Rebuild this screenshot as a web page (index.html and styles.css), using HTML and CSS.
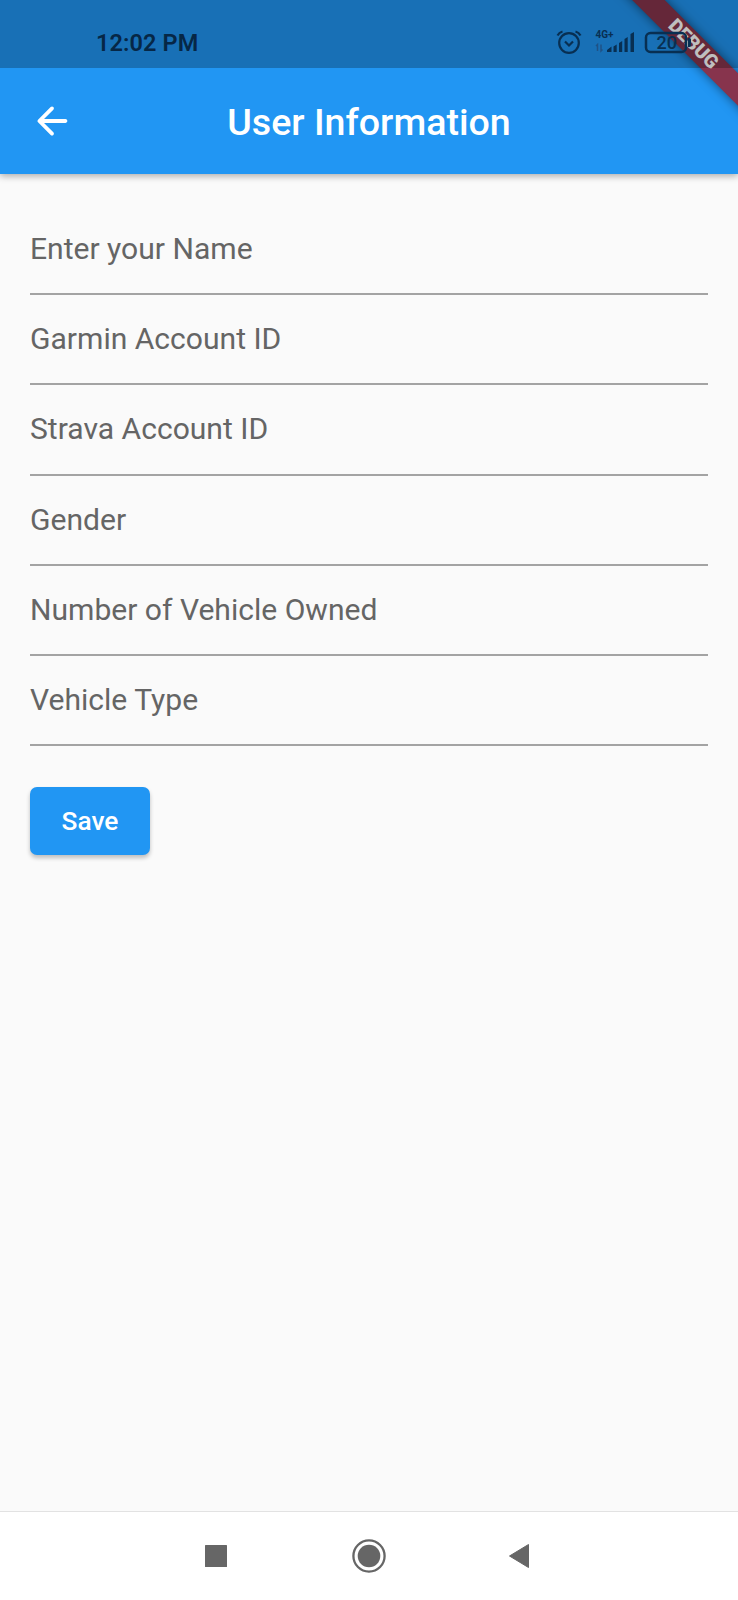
FILE: index.html
```html
<!DOCTYPE html>
<html lang="en">
<head>
<meta charset="utf-8">
<title>User Information</title>
<link rel="stylesheet" href="styles.css">
</head>
<body>
<div class="screen">
  <header class="top">
    <div class="status">
      <span class="clock">12:02 PM</span>
      <svg class="status-icons" width="138" height="36" viewBox="0 0 138 36">
        <g fill="none" stroke="#082f52" stroke-width="2.200">
          <circle cx="13" cy="18" r="9.800"/>
          <path d="M9 16.500l4 4 4-4M1.500 10.500Q3 7.500 6.500 6.500M19.500 6.500Q23 7.500 24.500 10.500"/>
          <rect x="90" y="8" width="40" height="19" rx="4.500" stroke-width="2.500"/>
        </g>
        <path class="ink" d="M132 13h1.500q1.500 0 1.500 1.500v6q0 1.500-1.500 1.500H132zM51 27v-2l4.500-3.500V27zM57.500 21.500l3.200-2V27h-3.200zM63 18l3.200-2v11h-3.200zM68.500 14l3.200-2v15h-3.200zM74.500 9l3.500-2v20h-3.500z"/>
        <path d="M41.500 26v-6.500l-1.500 1.500M45 19.500V26l1.500-1.500" fill="none" stroke="#1f5286" stroke-width="1.500"/>
        <text class="network" x="39.500" y="13">4G+</text>
        <text class="battery" x="100.500" y="23.500">20</text>
      </svg>
    </div>
    <div class="appbar">
      <svg class="back" width="46" height="46" viewBox="0 0 24 24"><path d="M19 11H7.830l4.880-4.880c.39-.39.39-1.030 0-1.420-.39-.39-1.020-.39-1.410 0l-6.590 6.590c-.39.39-.39 1.020 0 1.410l6.590 6.590c.39.39 1.020.39 1.410 0 .39-.39.39-1.020 0-1.410L7.830 13H19c.550 0 1-.450 1-1s-.450-1-1-1z"/></svg>
      <h1 class="title">User Information</h1>
    </div>
  </header>
  <main class="form">
    <div class="field">Enter your Name</div>
    <div class="field">Garmin Account ID</div>
    <div class="field">Strava Account ID</div>
    <div class="field">Gender</div>
    <div class="field">Number of Vehicle Owned</div>
    <div class="field">Vehicle Type</div>
    <button class="save">Save</button>
  </main>
  <nav class="nav">
    <svg width="22" height="22" viewBox="0 0 22 22"><rect width="22" height="22" rx="0.500"/></svg>
    <svg width="34" height="34" viewBox="0 0 34 34"><circle cx="17" cy="17" r="11.300"/><circle cx="17" cy="17" r="15.600" fill="none" stroke="#666" stroke-width="2.300"/></svg>
    <svg width="22" height="26" viewBox="0 0 22 26"><path d="M20.500 1.500v23L1.500 13z" stroke="#666" stroke-linejoin="round"/></svg>
  </nav>
  <div class="banner-clip"><div class="banner">DEBUG</div></div>
</div>
</body>
</html>
```
FILE: styles.css
```css
* { box-sizing: border-box; }
body { margin: 0; font-family: Roboto, sans-serif; }
.screen { position: relative; width: 738px; height: 1600px; display: flex; flex-direction: column; background: #fafafa; overflow: hidden; }
.top { height: 173.5px; flex: none; background: #2196f3; box-shadow: 0 2px 7px rgba(0,0,0,.33); }
/* Translucent system bar, drawn above the debug banner */
.status { position: relative; z-index: 2; height: 68px; background: rgba(0,0,0,.25); display: flex; justify-content: space-between; align-items: flex-start; padding: 25px 44px 0 96px; color: #062746; }
.clock { font-size: 23.5px; line-height: 36px; font-weight: 600; letter-spacing: .1px; }
.status-icons { display: block; }
.ink { fill: #082f52; }
.network { font-size: 10px; font-weight: 700; fill: #082f52; }
.battery { font-size: 18px; font-weight: 500; fill: #082f52; }
.appbar { height: 105.5px; display: grid; grid-template-columns: 108px 1fr 108px; align-items: center; padding-top: 1px; }
.back { margin: 0 0 0 29px; fill: #fff; }
.title { margin: 0; padding-top: 1px; text-align: center; color: #fff; font-size: 37.6px; font-weight: 500; line-height: 44px; }
.form { flex: 1; padding: 31.5px 30px 0; }
.field { height: 90.2px; border-bottom: 2px solid #a3a3a3; padding-top: 26px; font-size: 30.07px; line-height: 35px; color: #656565; }
.save { display: block; width: 120px; height: 68px; margin-top: 41px; padding: 0; border: 0; border-radius: 7px; background: #2196f3; color: #fff; font: 500 26.3px/68px Roboto, sans-serif; box-shadow: 0 3px 4px rgba(0,0,0,.24); }
.nav { height: 89px; flex: none; background: #fff; border-top: 1px solid #e2e2e2; display: grid; grid-template-columns: 22px 34px 22px; column-gap: 125px; align-items: center; padding-left: 205px; fill: #666; }
.nav svg:last-child { margin-left: -3px; }
.banner-clip { position: absolute; z-index: 1; top: 0; right: 0; width: 138px; height: 150px; overflow: hidden; }
.banner { position: absolute; left: -7px; top: 32.7px; width: 200px; height: 22.6px; transform: rotate(45deg); background: #87344d; box-shadow: 0 0 11px rgba(0,0,0,.5); text-align: center; color: #fff; font-size: 19.2px; line-height: 22.6px; font-weight: 900; }
```
